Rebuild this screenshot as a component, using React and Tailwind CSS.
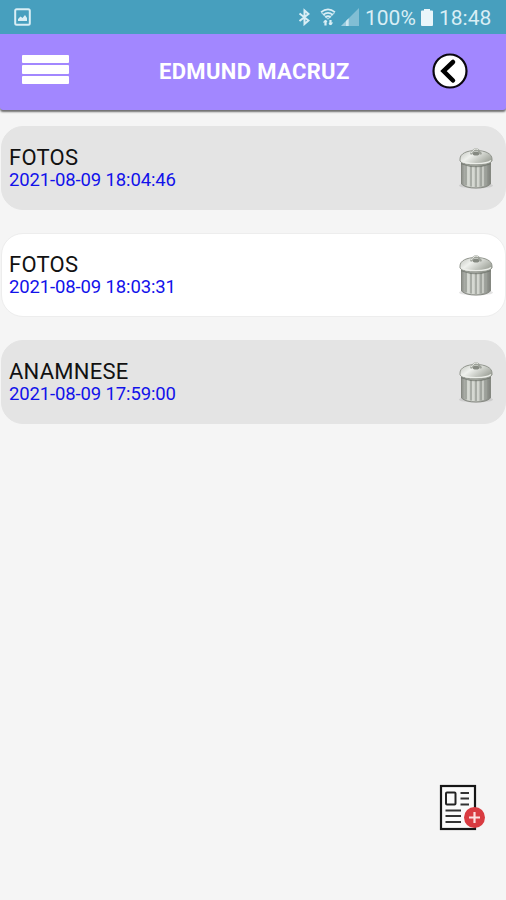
import React, { useState } from 'react';

const initialRecords = [
  { id: 1, title: 'FOTOS', date: '2021-08-09 18:04:46' },
  { id: 2, title: 'FOTOS', date: '2021-08-09 18:03:31' },
  { id: 3, title: 'ANAMNESE', date: '2021-08-09 17:59:00' },
];

function StatusBar() {
  return (
    <div className="flex h-[34px] items-center bg-[#479fbe] pr-[14px] pl-[14px] text-[#d9eef5]">
      <svg width="17" height="18" viewBox="0 0 17 18" fill="none">
        <rect x="1.2" y="1.2" width="14.6" height="15.6" rx="1.5" stroke="currentColor" strokeWidth="2" />
        <path d="M4 13V11l2.5-2.5 2 1.5 2.5-3 2 3v3z" fill="currentColor" />
      </svg>
      <div className="ml-auto flex items-center">
        {/* Bluetooth */}
        <svg width="12" height="18" viewBox="0 0 12 18" fill="none" stroke="currentColor" strokeWidth="2">
          <path d="M1.5 5.5l9 7-4 3.5V2.5l4 3.5-9 7" />
        </svg>
        {/* Wifi */}
        <svg className="ml-[10px]" width="16" height="18" viewBox="0 0 16 18" fill="none" stroke="currentColor">
          <path d="M1 4.2Q8-1.4 15 4.2M3.2 6.8Q8 2.8 12.8 6.8M5.4 9.3Q8 7 10.6 9.3" strokeWidth="1.6" />
          <path d="M1.5 4.5L8 11l6.5-6.5" strokeWidth="1.2" opacity="0.7" />
          <path d="M5.5 17.5v-5M10.5 12v5" strokeWidth="2.2" />
          <path d="M3.5 14.5l2-2 1.5 1.5M9 15l1.5 1.5 2-2" strokeWidth="1.2" />
        </svg>
        {/* Signal */}
        <svg className="ml-[5px]" width="18" height="18" viewBox="0 0 18 18" fill="currentColor">
          <path d="M0 18L18 0v18z" opacity="0.4" />
          <path d="M0 18l8-8v8z" opacity="0.3" />
          <path d="M5 13l2.5-2.5V18H5z" opacity="0.8" />
        </svg>
        <span className="ml-[6px] w-[51px] pt-[2px] font-['Roboto',sans-serif] text-[21px] leading-[32px] whitespace-nowrap">100%</span>
        {/* Battery */}
        <svg className="ml-[5px]" width="12" height="17" viewBox="0 0 12 17" fill="#e9f6fa">
          <path d="M3 0h6v1.5h2a1 1 0 0 1 1 1V16a1 1 0 0 1-1 1H1a1 1 0 0 1-1-1V2.5a1 1 0 0 1 1-1h2z" />
        </svg>
        <span className="ml-[6px] w-[53px] pt-[2px] font-['Roboto',sans-serif] text-[21px] leading-[32px] whitespace-nowrap">18:48</span>
      </div>
    </div>
  );
}

function Header() {
  return (
    <header className="flex h-[76px] items-center rounded-b-[3px] bg-[#a287ff] pr-[38px] pb-[2px] pl-[22px] shadow-[0_2px_2px_0_rgba(0,0,0,0.55)]">
      <button className="mb-[3px] flex w-[47px] flex-col gap-[2px]" title="Menu">
        <span className="h-[8px] w-[47px] rounded-[1px] bg-white"></span>
        <span className="h-[9px] w-[47px] rounded-[1px] bg-white"></span>
        <span className="h-[8px] w-[47px] rounded-[1px] bg-white"></span>
      </button>
      <h1 className="ml-[90px] pt-[2px] font-['Roboto',sans-serif] text-[22px] leading-none font-bold tracking-[0.35px] whitespace-nowrap text-white">
        EDMUND MACRUZ
      </h1>
      <button className="ml-auto" title="Voltar">
        <svg width="36" height="36" viewBox="0 0 36 36" fill="none">
          <circle cx="18" cy="18" r="16.5" fill="white" stroke="#0b0710" strokeWidth="2.2" />
          <path d="M21 9l-9.5 9 9.5 9.5" stroke="black" strokeWidth="4.5" strokeLinecap="round" />
        </svg>
      </button>
    </header>
  );
}

function TrashCan() {
  return (
    <svg width="36" height="44" viewBox="0 0 36 44">
      <defs>
        <linearGradient id="canBody">
          <stop offset="0" stopColor="#8b8e88" />
          <stop offset="0.25" stopColor="#d0d3cd" />
          <stop offset="0.55" stopColor="#c8cbc5" />
          <stop offset="1" stopColor="#7f827c" />
        </linearGradient>
        <linearGradient id="canLid" x2="1" y2="0.6">
          <stop offset="0" stopColor="#c0c3bd" />
          <stop offset="0.4" stopColor="#eff1ed" />
          <stop offset="1" stopColor="#9fa39a" />
        </linearGradient>
      </defs>
      <ellipse cx="18" cy="39.5" rx="17" ry="3" fill="#777" opacity="0.2" />
      <path d="M3.5 13v25q4 4 14.5 4t14.5-4V13z" fill="url(#canBody)" stroke="#858881" strokeWidth="1" />
      <path d="M8 19v20M13 20v20.5M18 20v21M23 20v20.5M28 19v20" stroke="#9da19a" strokeWidth="1.5" />
      <path d="M10 20v20M15 21v20M20 21v20M25 20v20" stroke="#dcdfd9" strokeWidth="1.2" />
      <path d="M3.5 17.5q14.5 6 29 0" fill="none" stroke="#666a62" strokeWidth="1.5" opacity="0.6" />
      <path d="M2 13C2 7.5 9 4.5 18 4.5s16 3 16 8.5v2c-3 5.5-29 5.5-32 0z" fill="url(#canLid)" stroke="#92968e" strokeWidth="1" />
      <path d="M3 14.5c4 4 26 4 30 0" fill="none" stroke="#eceee9" strokeWidth="1.2" />
      <ellipse cx="18" cy="7.5" rx="3.5" ry="2" fill="#858981" />
      <path d="M12.5 8q2-1 3-3.5 2.5-2 5 0 1 2.5 3 3.5" fill="none" stroke="#9ea29a" strokeWidth="2.2" />
      <path d="M13 7q2-1 3-3.5 2-1 4 0" fill="none" stroke="#e8eae5" strokeWidth="1" />
    </svg>
  );
}

function RecordCard({ record, striped, onDelete }) {
  return (
    <li
      className={`flex h-[84px] items-center justify-between rounded-[22px] border pr-[11px] pl-[7px] ${
        striped ? 'border-[#e4e4e4] bg-[#e4e4e4]' : 'border-[#ededed] bg-white'
      }`}
    >
      <div className="font-['Roboto',sans-serif] whitespace-nowrap">
        <p className="text-[22px] leading-[24px] tracking-[0.25px] text-[#111]">{record.title}</p>
        <p className="text-[18.5px] leading-[21px] tracking-[-0.13px] text-[#1212ea]">{record.date}</p>
      </div>
      <button onClick={() => onDelete(record.id)} title="Excluir">
        <TrashCan />
      </button>
    </li>
  );
}

function AddRecordIcon() {
  return (
    <svg width="47" height="48" viewBox="0 0 47 48" fill="none">
      <rect x="2" y="2" width="34" height="43" fill="#fafafa" stroke="#161616" strokeWidth="2.2" />
      <rect x="7" y="8.5" width="9.5" height="12" rx="1" stroke="#222" strokeWidth="2" />
      <path d="M21.5 9H30M21.5 14.5H30M21.5 20.5H30M6.5 26.5H22M6.5 32H22M6.5 38H22" stroke="#333" strokeWidth="1.9" />
      <circle cx="35.5" cy="33.5" r="10.5" fill="#d93b41" />
      <path d="M35.5 28v11M30 33.5h11" stroke="#fbe0e0" strokeWidth="2.2" />
    </svg>
  );
}

export default function App() {
  const [records, setRecords] = useState(initialRecords);

  const handleDelete = (id) => {
    setRecords(records.filter((r) => r.id !== id));
  };

  return (
    <div className="flex h-screen w-full flex-col overflow-hidden bg-[#f5f5f5]">
      <StatusBar />
      <Header />
      <ul className="mt-[16px] flex flex-col gap-[23px] pl-px">
        {records.map((record, i) => (
          <RecordCard key={record.id} record={record} striped={i % 2 === 0} onDelete={handleDelete} />
        ))}
      </ul>
      {/* Add record button */}
      <button className="mt-auto mr-[20px] mb-[68px] self-end" title="Adicionar">
        <AddRecordIcon />
      </button>
    </div>
  );
}
